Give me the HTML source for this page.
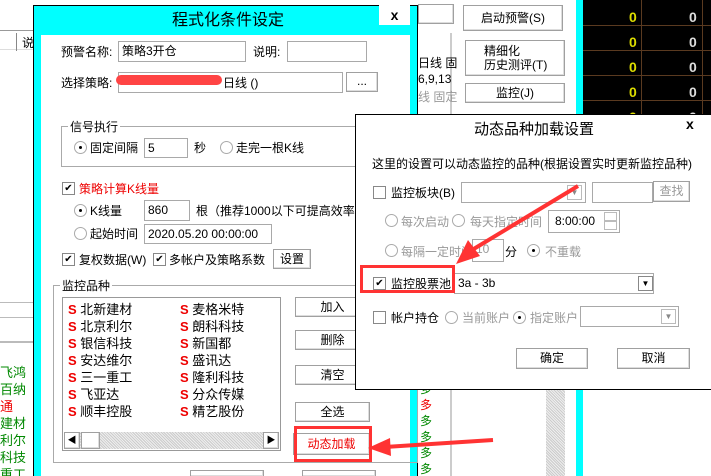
<!DOCTYPE html>
<html><head><meta charset="utf-8"><style>
*{margin:0;padding:0;box-sizing:border-box}
html,body{width:711px;height:476px;overflow:hidden}
body{position:relative;background:#fff;font-family:"Liberation Sans","Noto Sans CJK SC",sans-serif;font-size:12px;line-height:14px;color:#000}
.a{position:absolute;white-space:nowrap}
.btn{position:absolute;border:1px solid #a0a0a0;background:#fff;text-align:center;box-shadow:inset -1px -1px 0 #ddd}
.inp{position:absolute;border:1px solid #a9a9a9;background:#fff;padding-left:3px;line-height:18px}
.cb{position:absolute;width:13px;height:13px;border:1px solid #888;background:#fff;font-size:10px;line-height:11px;text-align:center}
.rd{position:absolute;width:13px;height:13px;border:1px solid #aaa;border-radius:50%;background:#fff}
.rd.on::after{content:"";position:absolute;left:4px;top:4px;width:3px;height:3px;background:#000;border-radius:50%}
.g{color:#999}
.s{color:#e00;font-weight:bold}
.grp{position:absolute;border:1px solid #aaa}
</style></head><body>
<!-- left strip -->
<div class="a" style="left:0;top:30px;width:33px;height:20px;border-top:1px solid #999;border-bottom:1px solid #ddd"></div>
<div class="a" style="left:16px;top:33px;width:1px;height:18px;background:#888"></div>
<div class="a" style="left:22px;top:36px">说</div>
<div class="a" style="left:0;top:302px;width:33px;height:1px;background:#bbb"></div>
<div class="a" style="left:0;top:317px;width:33px;height:1px;background:#bbb"></div>
<div class="a" style="left:0;top:341px;width:33px;height:2px;background:#bbb"></div>
<div class="a" style="left:0;top:364px;height:112px;overflow:hidden;line-height:17px;color:#080;font-size:13px">飞鸿<br>百纳<br><span style="color:#e00">通</span><br>建材<br>利尔<br>科技<br>重工</div>

<!-- behind right -->
<div class="btn" style="left:418px;top:4px;width:36px;height:20px"></div>
<div class="a" style="left:418px;top:33px;width:34px;height:443px;border-right:2px solid #ccc"></div>
<div class="a" style="left:418px;top:56px">日线 固</div>
<div class="a" style="left:418px;top:72px">6,9,13</div>
<div class="a g" style="left:418px;top:90px">线 固定</div>
<div class="btn" style="left:463px;top:5px;width:100px;height:26px;line-height:24px">启动预警(S)</div>
<div class="btn" style="left:465px;top:40px;width:100px;height:36px;line-height:14px;padding-top:3px;text-align:left;padding-left:18px">精细化<br>历史测评(T)</div>
<div class="btn" style="left:465px;top:83px;width:100px;height:20px;line-height:18px">监控(J)</div>
<div class="a" style="left:576px;top:0;width:7px;height:476px;background:#0ff"></div>
<div class="a" style="left:583px;top:0;width:128px;height:114px;background:#000"></div>
<div class="a" style="left:641px;top:0;width:1px;height:114px;background:#5a3a20"></div>
<div class="a" style="left:702px;top:0;width:1px;height:114px;background:#5a3a20"></div>
<div class="a" style="left:583px;top:25px;width:128px;height:1px;background:#5a3a20"></div>
<div class="a" style="left:583px;top:50px;width:128px;height:1px;background:#5a3a20"></div>
<div class="a" style="left:583px;top:75px;width:128px;height:1px;background:#5a3a20"></div>
<div class="a" style="left:583px;top:100px;width:128px;height:1px;background:#5a3a20"></div>
<div class="a" style="left:629px;top:5px;height:109px;overflow:hidden;line-height:25px;color:#dd0;font-weight:bold;font-size:14px">0<br>0<br>0<br>0<br>0</div>
<div class="a" style="left:689px;top:5px;height:109px;overflow:hidden;line-height:25px;color:#ddd;font-weight:bold;font-size:14px">0<br>0<br>0<br>0<br>0</div>
<!-- behind bottom -->
<div class="a" style="left:546px;top:389px;width:19px;height:87px;background:repeating-linear-gradient(45deg,#ccc 0 1px,#eee 1px 2px)"></div>
<div class="a" style="left:420px;top:381px;height:95px;overflow:hidden;line-height:16px;color:#080;font-size:12px">多<br><span style="color:#e00">多</span><br>多<br>多<br>多<br>多</div>

<!-- main dialog -->
<div class="a" style="left:33px;top:5px;width:385px;height:471px;background:#0ff;border:1px solid #000;border-bottom:0"></div>
<div class="a" style="left:41px;top:35px;width:369px;height:441px;background:#fff"></div>
<div class="a" style="left:172px;top:12px;font-size:16px;line-height:18px">程式化条件设定</div>
<div class="a" style="left:379px;top:5px;width:31px;height:20px;background:#fff;text-align:center;font-weight:bold;font-size:14px;line-height:20px">x</div>

<div class="a" style="left:61px;top:45px">预警名称:</div>
<div class="inp" style="left:118px;top:41px;width:128px;height:21px">策略3开仓</div>
<div class="a" style="left:253px;top:45px">说明:</div>
<div class="inp" style="left:287px;top:41px;width:80px;height:21px"></div>
<div class="a" style="left:61px;top:76px">选择策略:</div>
<div class="inp" style="left:118px;top:72px;width:225px;height:21px"></div>
<div class="a" style="left:116px;top:75px;width:106px;height:10px;background:#f44;border-radius:6px"></div>
<div class="a" style="left:223px;top:76px">日线 ()</div>
<div class="btn" style="left:346px;top:72px;width:32px;height:20px;line-height:16px">...</div>

<div class="grp" style="left:61px;top:126px;width:360px;height:41px"></div>
<div class="a" style="left:68px;top:120px;background:#fff;padding:0 2px">信号执行</div>
<div class="rd on" style="left:74px;top:141px"></div>
<div class="a" style="left:90px;top:141px">固定间隔</div>
<div class="inp" style="left:144px;top:138px;width:44px;height:20px">5</div>
<div class="a" style="left:194px;top:141px">秒</div>
<div class="rd" style="left:220px;top:141px"></div>
<div class="a" style="left:236px;top:141px">走完一根K线</div>

<div class="cb" style="left:62px;top:182px">✔</div>
<div class="a" style="left:79px;top:182px;color:#e00">策略计算K线量</div>
<div class="rd on" style="left:74px;top:204px"></div>
<div class="a" style="left:90px;top:204px">K线量</div>
<div class="inp" style="left:144px;top:200px;width:46px;height:21px">860</div>
<div class="a" style="left:196px;top:204px">根（推荐1000以下可提高效率</div>
<div class="rd" style="left:74px;top:227px"></div>
<div class="a" style="left:90px;top:227px">起始时间</div>
<div class="inp" style="left:144px;top:224px;width:128px;height:20px">2020.05.20 00:00:00</div>

<div class="cb" style="left:62px;top:253px">✔</div>
<div class="a" style="left:79px;top:253px">复权数据(W)</div>
<div class="cb" style="left:153px;top:253px">✔</div>
<div class="a" style="left:169px;top:253px">多帐户及策略系数</div>
<div class="btn" style="left:273px;top:249px;width:38px;height:20px;line-height:18px">设置</div>

<div class="grp" style="left:53px;top:285px;width:365px;height:178px"></div>
<div class="a" style="left:60px;top:279px;background:#fff;padding:0 2px">监控品种</div>
<div class="a" style="left:62px;top:297px;width:219px;height:154px;border:1px solid #999"></div>
<div class="a" style="left:68px;top:301px;line-height:17px;font-size:13px"><span class="s">S</span> 北新建材<br><span class="s">S</span> 北京利尔<br><span class="s">S</span> 银信科技<br><span class="s">S</span> 安达维尔<br><span class="s">S</span> 三一重工<br><span class="s">S</span> 飞亚达<br><span class="s">S</span> 顺丰控股</div>
<div class="a" style="left:180px;top:301px;line-height:17px;font-size:13px"><span class="s">S</span> 麦格米特<br><span class="s">S</span> 朗科科技<br><span class="s">S</span> 新国都<br><span class="s">S</span> 盛讯达<br><span class="s">S</span> 隆利科技<br><span class="s">S</span> 分众传媒<br><span class="s">S</span> 精艺股份</div>
<div class="a" style="left:64px;top:432px;width:215px;height:17px;background:repeating-linear-gradient(45deg,#ccc 0 1px,#eee 1px 2px)"></div>
<div class="btn" style="left:64px;top:432px;width:16px;height:17px;font-size:9px;line-height:15px">◀</div>
<div class="btn" style="left:81px;top:432px;width:19px;height:17px"></div>
<div class="btn" style="left:263px;top:432px;width:16px;height:17px;font-size:9px;line-height:15px">▶</div>
<div class="btn" style="left:295px;top:297px;width:75px;height:20px;line-height:18px">加入</div>
<div class="btn" style="left:295px;top:330px;width:75px;height:20px;line-height:18px">删除</div>
<div class="btn" style="left:295px;top:365px;width:75px;height:20px;line-height:18px">清空</div>
<div class="btn" style="left:295px;top:402px;width:75px;height:20px;line-height:18px">全选</div>
<div class="btn" style="left:293px;top:433px;width:77px;height:22px;line-height:20px;color:#e00">动态加载</div>
<div class="a" style="left:294px;top:426px;width:78px;height:36px;border:3px solid #f33"></div>
<div class="btn" style="left:190px;top:470px;width:74px;height:6px;border-bottom:0"></div>
<div class="btn" style="left:302px;top:470px;width:74px;height:6px;border-bottom:0"></div>

<!-- second dialog -->
<div class="a" style="left:355px;top:114px;width:356px;height:276px;background:#fff;border-top:1px solid #000;border-bottom:1px solid #000;border-left:1px solid #000"></div>
<div class="a" style="left:474px;top:121px;font-size:15px;line-height:17px">动态品种加载设置</div>
<div class="a" style="left:686px;top:117px;font-weight:bold;font-size:14px">x</div>
<div class="a" style="left:372px;top:157px">这里的设置可以动态监控的品种(根据设置实时更新监控品种)</div>
<div class="cb" style="left:373px;top:186px"></div>
<div class="a" style="left:391px;top:186px">监控板块(B)</div>
<div class="inp" style="left:461px;top:182px;width:125px;height:21px"></div>
<div class="a" style="left:567px;top:185px;width:15px;height:15px;border:1px solid #bbb;font-size:8px;color:#888;text-align:center;line-height:14px">▼</div>
<div class="inp" style="left:592px;top:182px;width:61px;height:21px"></div>
<div class="btn" style="left:653px;top:181px;width:37px;height:21px;line-height:19px;color:#999">查找</div>
<div class="rd" style="left:385px;top:214px"></div>
<div class="a g" style="left:401px;top:215px">每次启动</div>
<div class="rd" style="left:452px;top:214px"></div>
<div class="a g" style="left:470px;top:215px">每天指定时间</div>
<div class="inp" style="left:548px;top:210px;width:72px;height:23px;line-height:21px;padding-left:6px">8:00:00</div>
<div class="a" style="left:604px;top:212px;width:13px;height:9px;border:1px solid #bbb"></div>
<div class="a" style="left:604px;top:221px;width:13px;height:9px;border:1px solid #bbb"></div>
<div class="rd" style="left:385px;top:244px"></div>
<div class="a g" style="left:401px;top:245px">每隔一定时间</div>
<div class="inp" style="left:472px;top:239px;width:32px;height:23px;color:#999">10</div>
<div class="a" style="left:505px;top:245px">分</div>
<div class="rd on" style="left:527px;top:244px"></div>
<div class="a g" style="left:545px;top:245px">不重载</div>
<div class="cb" style="left:373px;top:277px">✔</div>
<div class="a" style="left:391px;top:277px">监控股票池</div>
<div class="inp" style="left:454px;top:273px;width:200px;height:21px">3a - 3b</div>
<div class="a" style="left:638px;top:276px;width:15px;height:15px;border:1px solid #888;font-size:8px;text-align:center;line-height:14px">▼</div>
<div class="a" style="left:360px;top:265px;width:95px;height:28px;border:3px solid #f33"></div>
<div class="cb" style="left:373px;top:311px"></div>
<div class="a" style="left:391px;top:311px">帐户持仓</div>
<div class="rd" style="left:445px;top:311px"></div>
<div class="a g" style="left:462px;top:311px">当前账户</div>
<div class="rd on" style="left:513px;top:311px"></div>
<div class="a g" style="left:530px;top:311px">指定账户</div>
<div class="inp" style="left:580px;top:306px;width:99px;height:21px"></div>
<div class="a" style="left:661px;top:309px;width:15px;height:15px;border:1px solid #bbb;font-size:8px;color:#888;text-align:center;line-height:14px">▼</div>
<div class="btn" style="left:516px;top:348px;width:72px;height:21px;line-height:19px">确定</div>
<div class="btn" style="left:617px;top:348px;width:73px;height:21px;line-height:19px">取消</div>

<!-- arrows -->
<svg class="a" style="left:0;top:0" width="711" height="476">
<path d="M578 186 L472 250" stroke="#f33" stroke-width="4" fill="none"/>
<path d="M456 264 L468 240 L480 256 Z" fill="#f33"/>
<path d="M493 440 L385 447" stroke="#f33" stroke-width="4" fill="none"/>
<path d="M368 448 L390 438 L391 456 Z" fill="#f33"/>
</svg>
</body></html>
